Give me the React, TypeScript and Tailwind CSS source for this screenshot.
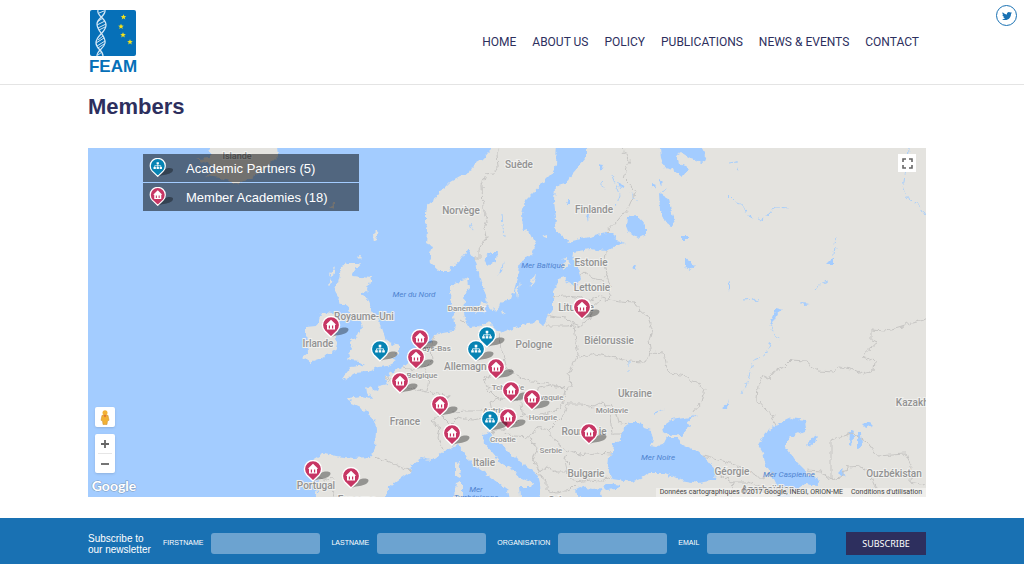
import { useState } from "react";

const NAV = ["Home", "About us", "Policy", "Publications", "News & Events", "Contact"];
const FIELDS = ["Firstname", "Lastname", "Organisation", "Email"];

type Kind = "partner" | "academy";

// map drawing area
const MAP = { x: 88, y: 148, w: 838, h: 349 };

const PINS: { x: number; y: number; kind: Kind; name: string }[] = [
  { x: 582, y: 308, kind: "academy", name: "Lituanie" },
  { x: 331, y: 326, kind: "academy", name: "Irlande" },
  { x: 487, y: 336, kind: "partner", name: "Berlin" },
  { x: 420, y: 339, kind: "academy", name: "Pays-Bas" },
  { x: 380, y: 350, kind: "partner", name: "Londres" },
  { x: 476, y: 350, kind: "partner", name: "Halle" },
  { x: 416, y: 358, kind: "academy", name: "Belgique" },
  { x: 496, y: 368, kind: "academy", name: "Tchéquie" },
  { x: 400, y: 382, kind: "academy", name: "Paris" },
  { x: 511, y: 391, kind: "academy", name: "Autriche" },
  { x: 532, y: 399, kind: "academy", name: "Hongrie" },
  { x: 440, y: 405, kind: "academy", name: "Suisse" },
  { x: 508, y: 418, kind: "academy", name: "Croatie" },
  { x: 490, y: 420, kind: "partner", name: "Trieste" },
  { x: 589, y: 433, kind: "academy", name: "Roumanie" },
  { x: 452, y: 434, kind: "academy", name: "Italie" },
  { x: 313, y: 470, kind: "academy", name: "Portugal" },
  { x: 351, y: 477, kind: "academy", name: "Espagne" },
];

const LAND = [
  // Norway and Sweden
  "493,140 493,148 488,153 483,159 476,163 471,168 468,174 460,177 451,182 445,188 440,191 436,198 430,202 426,207 425,214 425,221 428,229 427,243 433,246 430,253 431,263 440,271 448,271 460,261 468,249 474,257 478,269 481,283 486,294 487,306 491,310 498,309 500,303 511,299 515,288 518,273 520,261 531,256 536,244 531,234 523,229 522,214 525,201 533,193 541,184 551,174 556,166 557,140",
  // Finland, the Baltic states and the continent
  "586,140 586,158 573,173 565,183 555,186 554,201 556,218 555,229 565,238 568,242 581,239 606,233 613,233 615,239 625,243 615,246 606,251 590,249 573,252 572,258 580,263 578,269 581,279 576,288 568,283 565,277 558,279 553,293 553,308 548,316 543,326 538,322 528,323 515,328 503,333 496,330 488,322 478,327 470,328 466,322 463,309 465,294 469,288 468,278 460,281 451,286 450,299 453,313 456,326 454,331 443,333 434,335 431,342 426,345 423,341 418,352 411,360 401,368 391,373 386,377 388,384 379,386 377,391 372,389 367,386 368,393 371,398 361,396 348,398 351,403 362,408 368,414 375,420 376,430 375,448 371,457 354,458 336,456 325,453 318,457 313,460 315,470 318,483 316,505 386,505 388,488 398,480 410,472 411,465 421,458 431,460 441,453 451,448 458,445 465,453 471,463 485,473 498,483 508,490 511,505 521,505 519,487 531,487 533,483 518,477 513,470 501,463 493,453 484,443 483,435 491,432 493,439 498,441 505,448 515,458 528,467 538,475 540,483 541,505 584,505 580,498 574,490 580,487 592,489 603,488 600,494 604,505 940,505 940,140",
  // Great Britain
  "345,263 361,263 355,270 352,276 362,277 371,278 368,289 361,295 368,299 373,313 380,324 383,333 386,341 390,343 399,346 398,353 392,358 397,361 388,366 378,367 368,372 355,373 343,380 345,375 351,367 365,365 358,361 346,359 353,350 350,340 358,337 362,328 358,318 350,314 347,306 338,303 339,296 335,289 338,282 341,270",
  // Ireland
  "321,313 327,312 333,313 338,323 335,332 337,343 335,351 321,358 310,362 303,357 309,352 308,347 312,343 306,337 306,327 316,326 319,320",
  // Iceland
  "208,140 276,140 278,156 265,169 251,178 236,184 221,178 205,176 214,170 209,164 196,159 211,158",
  // islands
  "455,464 459,462 461,471 459,478 455,476",
  "456,482 462,480 462,496 458,505 454,497",
  "472,308 477,305 480,311 476,314",
  "481,301 487,303 484,314 480,309",
  "530,281 536,274 534,282 531,286",
  "516,291 520,283 517,298",
  "560,266 568,261 571,263 564,269",
  "561,258 568,257 567,261",
  "541,237 547,235 547,239",
  "373,234 378,229 376,241 374,242",
  "329,275 335,266 333,276",
  "328,284 332,278 330,286",
  "328,207 334,203 334,209",
  "501,311 506,313 502,315",
  "358,257 362,254 361,260",
];

const WATER = [
  // Black Sea
  "607,467 608,457 613,454 614,443 620,440 622,432 629,422 640,422 645,428 651,430 653,438 651,446 656,447 664,444 667,438 678,438 683,445 698,452 708,460 716,470 715,480 698,483 681,480 665,473 648,473 640,479 632,482 612,479",
  // Azov
  "661,430 666,424 671,420 691,417 698,414 688,422 690,427 681,435 670,436",
  // Caspian
  "791,418 805,420 806,430 795,435 786,440 786,447 793,457 798,463 805,470 807,478 815,476 820,481 817,486 805,484 800,487 791,493 785,505 779,505 778,487 771,473 765,463 763,453 758,445 765,433 776,425",
  // Ladoga and Onega
  "628,217 637,216 646,226 646,235 638,239 630,233 627,225",
  "659,140 661,158 665,168 673,170 682,177 688,170 686,165 678,163 676,156 682,153 692,159 703,163 707,160 703,150 697,140",
  // lakes
  "485,257 491,252 497,252 496,260 488,266 486,262",
  "498,275 504,261 502,270",
  "659,193 669,199 671,210 675,220 671,226 665,222 660,209",
  "682,236 687,236 687,240 682,240",
  "685,257 690,261 695,266 690,270 685,266",
  "658,178 664,183 661,186",
  "651,183 656,185 655,188 651,187",
  "632,267 637,265 636,270",
  "618,181 624,187 620,189",
  "598,164 604,165 601,171",
  "566,201 569,197 569,204",
  "586,215 589,213 588,222",
  "849,445 850,432 854,430 852,446",
  "857,432 861,432 862,447 857,448",
  "862,424 870,422 873,425 866,428",
  "839,473 843,469 845,475 841,477",
  "806,448 812,438 817,435 815,441",
  "721,409 727,404 729,399 727,409",
  "653,416 657,411 665,409 658,412",
  "727,283 730,281 729,292",
  "775,308 783,310 777,314 772,325 770,323 775,312",
  "827,264 833,258 833,264",
  "802,303 810,304 804,305",
  "603,487 608,483 620,485 616,489 606,490",
];

const RIVERS = [
  "770,325 773,331 776,337 780,339",
  "771,342 767,352 760,358 752,361 750,372 747,383 741,394",
  "728,195 735,202 743,205 748,216 760,220 768,215 775,207 790,208",
  "909,148 908,160 905,175 903,189 907,198 918,204 925,215",
  "834,254 835,246 836,236",
  "815,290 820,284 828,281",
  "743,300 752,299 759,300",
  "666,190 660,193 657,196",
  "628,360 628,372",
  "612,176 620,195 616,206",
  "630,193 637,201",
  "601,180 604,190",
  "470,224 474,232",
  "502,215 504,238",
  "730,164 736,163 738,172",
];

const BORDERS = [
  "501,140 497,154 498,168 494,173 486,174 482,185 483,210 487,220 484,228 486,238 479,250 479,259 474,259",
  "622,140 624,152 629,160 624,178 630,184 635,193 628,208 618,220 606,233",
  "606,251 605,262 607,275 603,280 595,279 585,272 580,276",
  "553,298 563,296 576,297 590,300 599,297 609,300 611,288 607,276",
  "609,300 620,302 634,303 640,310 648,317 652,329 649,340 651,355",
  "548,316 566,318 570,322 580,326 590,318 592,307 600,300",
  "545,326 566,326 574,325 576,342 578,355 568,375 571,385 565,395",
  "578,358 595,354 612,357 628,361 645,362 651,352 664,353 668,372 684,376 692,382 700,384 704,389 701,403 691,414",
  "499,333 502,350 506,365 502,370 484,378 488,389 498,399",
  "506,367 518,376 532,382 545,383 565,388",
  "498,399 509,397 520,401 528,394 540,388 550,386 565,388",
  "565,390 563,402 558,410 545,414 528,417 522,413 521,402",
  "498,399 490,402 492,411 480,411 466,411 453,412",
  "386,377 399,385 410,388 427,392 449,396 446,408 439,414 432,422 440,428 438,438 443,450",
  "403,367 415,369 426,366 432,360 431,347 434,336",
  "425,368 429,378 427,390",
  "439,414 450,425 458,417 464,419 473,420 483,418 492,414 498,416",
  "483,418 491,424 493,434",
  "493,430 504,430 515,423 523,415",
  "505,433 515,436 530,437 537,448 533,461 540,472",
  "530,437 537,427 548,430 556,442 567,451 565,460 570,465",
  "549,430 561,418 568,404 582,404 592,407 602,402 610,410 612,425 613,434 622,434",
  "602,402 614,408 618,422 626,424",
  "567,451 580,455 595,453 612,454",
  "565,460 568,475 576,482 590,480 600,481 610,477",
  "537,473 546,480 546,490 556,493 570,490 575,485",
  "540,472 548,467 556,472 568,472",
  "375,457 390,462 402,468 411,470",
  "332,477 336,483 332,489 334,498",
  "317,477 325,480 332,477",
  "460,320 465,323",
  "776,425 772,419 774,415 765,409 757,400 758,386 763,376 769,379 773,372 784,367 791,360 806,361 818,371 834,372 840,367 851,369 862,374 874,371 875,361 862,356 872,347 878,342 871,340 871,330 885,331 905,325 930,318",
  "831,480 831,440 852,433 868,443 878,456 905,454 911,465 910,482 925,485",
  "806,470 820,471 831,480 841,478 848,467 862,466 872,480 880,498",
  "703,456 722,461 738,466 752,473 763,479 773,473",
  "716,472 732,482 748,482 765,490",
  "733,482 731,498",
];

const LABELS: [string, number, number, number][] = [
  ["Islande", 237, 159, 9],
  ["Suède", 519, 168, 10],
  ["Norvège", 461, 214, 10],
  ["Finlande", 594, 213, 10],
  ["Estonie", 591, 266, 10],
  ["Lettonie", 592, 291, 10],
  ["Lituanie", 576, 311, 10],
  ["Danemark", 466, 311, 8],
  ["Royaume-Uni", 364, 320, 10],
  ["Irlande", 318, 347, 10],
  ["Pays-Bas", 434, 351, 8],
  ["Belgique", 422, 378, 8],
  ["Allemagne", 468, 370, 10],
  ["Pologne", 534, 348, 10],
  ["Biélorussie", 609, 344, 10],
  ["Ukraine", 635, 397, 10],
  ["Tchéquie", 508, 390, 8],
  ["Slovaquie", 546, 400, 8],
  ["Autriche", 498, 413, 8],
  ["Hongrie", 543, 420, 8],
  ["Moldavie", 612, 413, 8],
  ["Roumanie", 584, 435, 10],
  ["France", 405, 425, 10],
  ["Croatie", 503, 442, 8],
  ["Serbie", 551, 453, 8],
  ["Italie", 484, 466, 10],
  ["Bulgarie", 586, 477, 10],
  ["Portugal", 316, 489, 10],
  ["Espagne", 357, 503, 10],
  ["Géorgie", 732, 475, 10],
  ["Azerbaïdjan", 768, 493, 10],
  ["Ouzbékistan", 894, 477, 10],
  ["Kazakhstan", 922, 406, 10],
  ["Grèce", 561, 504, 10],
];

const SEAS: [string, number, number][] = [
  ["Mer du Nord", 414, 297],
  ["Mer Baltique", 543, 268],
  ["Mer Noire", 658, 460],
  ["Mer Caspienne", 789, 477],
  ["Mer", 476, 492],
  ["Tyrrhénienne", 476, 500],
];

function Pin({ kind, className }: { kind: Kind; className: string }) {
  return (
    <svg viewBox="0 0 32 24" className={className} aria-hidden="true">
      <path d="M10 21.500 C12 17 15 13.500 20 12 C25 10.700 28.500 12 27.300 14.600 C26 17.500 21 19 17 19.300 C14 19.500 12 20.300 10 21.500 Z" fill="#000" opacity="0.350" />
      <path
        d="M10 21 L3.800 15 A8.600 8.600 0 1 1 16.200 15 Z"
        fill={kind === "partner" ? "#0683b3" : "#c73664"}
        stroke="#fff"
        strokeWidth="1.400"
        strokeLinejoin="round"
      />
      {kind === "partner" ? (
        <g fill="#fff">
          <path d="M8.700 4.800h2.600v2.400H8.700zM5.200 10.200h2.600v2.400H5.200zM8.700 10.200h2.600v2.400H8.700zM12.200 10.200h2.600v2.400h-2.600z" />
          <path d="M6.500 10.500V8.800h7v1.700M10 7v4" fill="none" stroke="#fff" strokeWidth="0.800" />
        </g>
      ) : (
        <path d="M10 3.800 L15.200 8.800 H14 V13.600 H6 V8.800 H4.800 Z M7.800 9.600 V12.600 H9 V9.600 Z M11 9.600 V12.600 H12.200 V9.600 Z" fill="#fff" fillRule="evenodd" />
      )}
    </svg>
  );
}

function Logo() {
  return (
    <a href="#" aria-label="FEAM" className="block w-12">
      <svg viewBox="0 0 48 64" className="block w-full overflow-visible">
        <rect x="2" y="0" width="46" height="46" rx="2" fill="#0670b8" />
        <g fill="none" stroke="#d5e8f6" strokeWidth="1.300">
          <path d="M10 0 C8 6 18 8 18 15 C18 23 8 25 8 33 C8 39 15 40 15 46" />
          <path d="M17 0 C18 6 9 8 9 14 C9 22 18 25 17 33 C16 39 9 40 9 46" />
          <path strokeWidth="1" d="M11 3l5-2M9 12l6-4M9 15l8-4M10 18l8-4M11 20l6-3M10 30l5-4M8 33l8-5M9 36l8-5M10 38l6-4M10 45l4-3" />
        </g>
        <g fill="#f5e21b">
          {[[35.5, 7], [33, 16.5], [35, 25], [42, 32]].map(([x, y]) => (
            <path key={y} transform={`translate(${x} ${y})`} d="M0-2.800L.8-.9 2.800-.8 1.200.4 1.800 2.500 0 1.300-1.800 2.500-1.200.4-2.800-.8-.8-.9Z" />
          ))}
        </g>
        <text x="25" y="62" textAnchor="middle" fontSize="17" fontWeight="700" fill="#0670b8" fontFamily="Liberation Sans, sans-serif">
          FEAM
        </text>
      </svg>
    </a>
  );
}

function MapDrawing() {
  return (
    <svg viewBox={`${MAP.x} ${MAP.y} ${MAP.w} ${MAP.h}`} className="block w-full bg-[#a3ccff]">
      <filter id="coast" x="0" y="0" width="1" height="1" colorInterpolationFilters="sRGB">
        <feTurbulence type="fractalNoise" baseFrequency="0.200" numOctaves="2" seed="4" />
        <feDisplacementMap in="SourceGraphic" scale="6" xChannelSelector="R" yChannelSelector="G" />
      </filter>
      <g filter="url(#coast)">
        <g fill="#e4e3df">
          {LAND.map((p) => (
            <polygon key={p} points={p} />
          ))}
        </g>
        <g fill="#a3ccff">
          {WATER.map((p) => (
            <polygon key={p} points={p} />
          ))}
        </g>
        <g fill="none" stroke="#c6c5c3" strokeWidth="1">
          {BORDERS.map((p) => (
            <polyline key={p} points={p} />
          ))}
        </g>
        <g fill="none" stroke="#a9cffb" strokeWidth="1" strokeDasharray="7 3">
          {RIVERS.map((p) => (
            <polyline key={p} points={p} />
          ))}
        </g>
      </g>
      <g fontFamily="Roboto, sans-serif" textAnchor="middle">
        <g fontWeight="500" fill="#929292" stroke="#f0f0ee" strokeWidth="2" paintOrder="stroke">
          {LABELS.map(([text, x, y, size]) => (
            <text key={text} x={x} y={y} fontSize={size}>
              {text}
            </text>
          ))}
        </g>
        <g fontStyle="italic" fontSize="8" fill="#4f83cf">
          {SEAS.map(([text, x, y]) => (
            <text key={text} x={x} y={y}>
              {text}
            </text>
          ))}
        </g>
      </g>
    </svg>
  );
}

function MapControls() {
  return (
    <>
      <button aria-label="Plein écran" className="absolute top-1.5 right-2.5 grid size-[18px] place-items-center bg-white">
        <svg viewBox="0 0 11 11" className="size-[11px]" fill="none" stroke="#666" strokeWidth="1.600">
          <path d="M1 4V1h3M7 1h3v3M10 7v3H7M4 10H1V7" />
        </svg>
      </button>
      <div className="absolute bottom-0 left-[7px] flex flex-col items-start">
        <button aria-label="Street View" className="grid size-5 place-items-center rounded-xs bg-white shadow-sm">
          <svg viewBox="0 0 10 15" className="h-[15px]">
            <circle cx="5" cy="2.800" r="2.500" fill="#f2b134" />
            <path d="M2 5.300h6l1 5-1.500.5L7 14.500H3L2.500 10.800 1 10.300Z" fill="#f2b134" stroke="#c98c2a" strokeWidth="0.500" />
            <path d="M3.500 5.300h3L5 7.500Z" fill="#e0662b" />
          </svg>
        </button>
        <div className="mt-[7px] flex w-5 flex-col items-center rounded-xs bg-white shadow-sm">
          <button aria-label="Zoom avant" className="grid h-[19px] w-full place-items-center">
            <svg viewBox="0 0 8 8" className="size-2" stroke="#666" strokeWidth="1.800">
              <path d="M0 4h8M4 0v8" />
            </svg>
          </button>
          <div className="h-px w-3.5 bg-[#e6e6e6]" />
          <button aria-label="Zoom arrière" className="grid h-[19px] w-full place-items-center">
            <svg viewBox="0 0 8 8" className="size-2" stroke="#666" strokeWidth="1.800">
              <path d="M0 4h8" />
            </svg>
          </button>
        </div>
        <svg viewBox="0 0 48 20" className="mt-1 -ml-1 h-5 w-12" aria-label="Google">
          <text x="23" y="10" dy="4" textAnchor="middle" fontSize="14" fontWeight="700" fontFamily="Lato, sans-serif" fill="#fff" stroke="#7f9cbf" strokeWidth="1" paintOrder="stroke">
            Google
          </text>
        </svg>
      </div>
      <div className="absolute right-0 bottom-0 flex gap-2 bg-[#f1f0ee]/80 px-1 font-[Roboto,sans-serif] text-[7px] leading-[9px] text-[#444]">
        <span>Données cartographiques ©2017 Google, INEGI, ORION-ME</span>
        <a href="#">Conditions d'utilisation</a>
      </div>
    </>
  );
}

function Legend() {
  return (
    <ul className="absolute top-1.5 left-[55px] flex w-[216px] flex-col gap-px text-[13px] text-white">
      <li className="flex h-7 items-center bg-black/50 pl-1.5">
        <Pin kind="partner" className="h-[21px] w-7 shrink-0" />
        <span className="pt-px pl-[9px]">Academic Partners (5)</span>
      </li>
      <li className="flex h-7 items-center bg-black/50 pl-1.5">
        <Pin kind="academy" className="h-[21px] w-7 shrink-0" />
        <span className="pt-px pl-[9px]">Member Academies (18)</span>
      </li>
    </ul>
  );
}

export default function App() {
  const [values, setValues] = useState<Record<string, string>>({});

  return (
    <div className="flex min-h-screen flex-col bg-white font-['Liberation_Sans',Arial,sans-serif]">
      <header className="relative flex h-[85px] items-center justify-between border-b border-[#e4e4e4] pr-[105px] pl-[88px]">
        <Logo />
        <nav className="flex gap-4 font-[Roboto,sans-serif] text-[12px] text-[#2d2f5e] uppercase">
          {NAV.map((item) => (
            <a key={item} href="#">
              {item}
            </a>
          ))}
        </nav>
        <a href="#" aria-label="Twitter" className="absolute top-[5px] right-[7px] grid size-[21px] place-items-center rounded-full border border-[#1971b3]">
          <svg viewBox="0 0 24 24" className="size-[10px]" fill="#1971b3">
            <path d="M23.950 4.570a10 10 0 0 1-2.820.770 4.960 4.960 0 0 0 2.160-2.720c-.950.560-2 .960-3.130 1.180a4.920 4.920 0 0 0-8.380 4.480C7.690 8.090 4.070 6.130 1.640 3.160a4.820 4.820 0 0 0-.670 2.480c0 1.710.870 3.210 2.190 4.100a4.900 4.900 0 0 1-2.230-.620v.060a4.920 4.920 0 0 0 3.950 4.830 5 5 0 0 1-2.210.080 4.940 4.940 0 0 0 4.600 3.420A9.870 9.870 0 0 1 0 19.540a14 14 0 0 0 7.550 2.210c9.050 0 14-7.500 14-13.980 0-.210 0-.420-.020-.630a9.940 9.940 0 0 0 2.460-2.550Z" />
          </svg>
        </a>
      </header>

      <main className="pr-[98px] pl-[88px]">
        <h1 className="pt-[7px] text-[22px] leading-[30px] font-bold text-[#2d2f5e]">Members</h1>
        <section aria-label="Carte des membres" className="relative mt-[26px] mb-[21px] overflow-hidden">
          <MapDrawing />
          {PINS.map((pin) => (
            <button
              key={pin.name}
              aria-label={pin.name}
              className="absolute -mt-2.5 -ml-2.5 h-6 w-8"
              style={{ left: `${((pin.x - MAP.x) / MAP.w) * 100}%`, top: `${((pin.y - MAP.y) / MAP.h) * 100}%` }}
            >
              <Pin kind={pin.kind} className="h-6 w-8" />
            </button>
          ))}
          <Legend />
          <MapControls />
        </section>
      </main>

      <footer className="flex-1 bg-[#1971b3] pr-[98px] pl-[88px] text-white">
        <form className="flex items-center pt-3.5" onSubmit={(e) => e.preventDefault()}>
          <p className="w-[75px] shrink-0 text-[10px] leading-[11px] whitespace-nowrap">
            Subscribe to
            <br />
            our newsletter
          </p>
          <div className="flex flex-1 gap-[11px]">
            {FIELDS.map((field) => (
              <label key={field} className="flex items-center gap-2 text-[7px] uppercase">
                {field}
                <input
                  name={field}
                  value={values[field] ?? ""}
                  onChange={(e) => setValues({ ...values, [field]: e.target.value })}
                  className="h-[21px] w-[109px] rounded-[3px] bg-[#6ca3d0] px-1.5 text-[10px]"
                />
              </label>
            ))}
          </div>
          <button className="h-[23px] w-20 shrink-0 bg-[#2d2f5e] font-['Noto_Sans',sans-serif] text-[9px] uppercase">Subscribe</button>
        </form>
      </footer>
    </div>
  );
}
